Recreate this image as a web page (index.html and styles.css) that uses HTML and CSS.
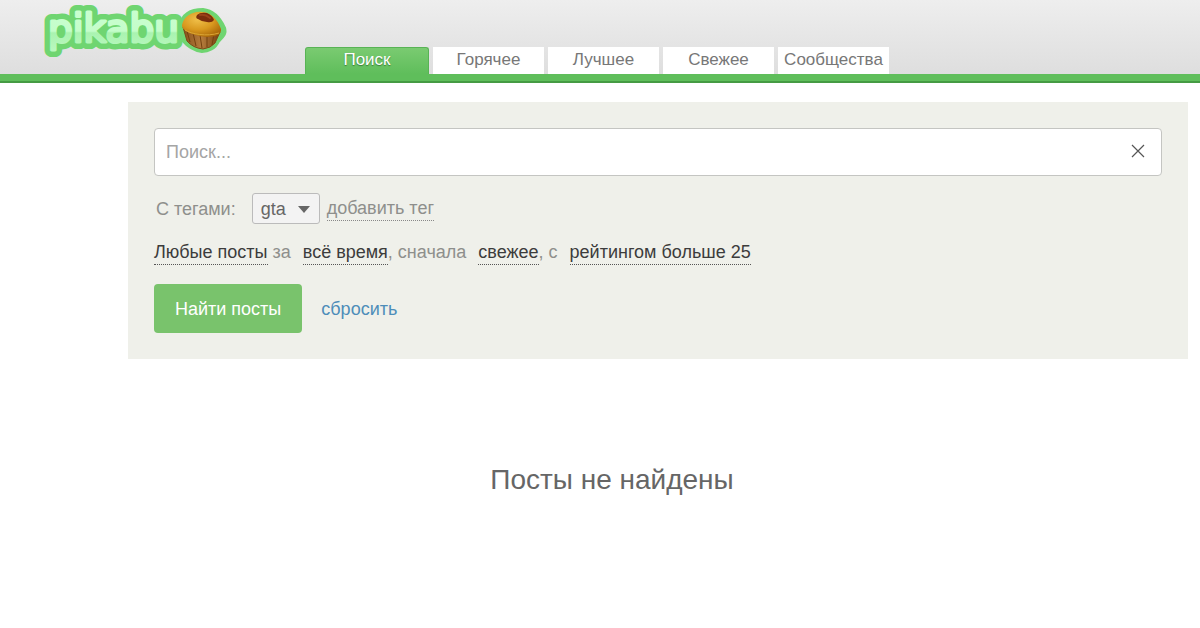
FILE: index.html
```html
<!DOCTYPE html>
<html lang="ru">
<head>
<meta charset="utf-8">
<meta name="viewport" content="width=device-width, initial-scale=1">
<title>Поиск</title>
<link rel="stylesheet" href="styles.css">
</head>
<body>
<header class="header">
  <a class="logo" href="#" aria-label="pikabu">
    <svg width="188" height="56" viewBox="40 4 188 56">
      <defs>
        <linearGradient id="letters" gradientUnits="userSpaceOnUse" x1="0" y1="10" x2="0" y2="54">
          <stop offset="0" stop-color="#c9ffd0"/>
          <stop offset="0.48" stop-color="#c4fdca"/>
          <stop offset="0.52" stop-color="#a9f3b0"/>
          <stop offset="1" stop-color="#bdf9c2"/>
        </linearGradient>
        <radialGradient id="top" cx="0.4" cy="0.3" r="0.75">
          <stop offset="0" stop-color="#f0c04a"/>
          <stop offset="0.55" stop-color="#d9991f"/>
          <stop offset="1" stop-color="#a86608"/>
        </radialGradient>
        <linearGradient id="cup" x1="0" x2="1">
          <stop offset="0" stop-color="#87501b"/>
          <stop offset="0.5" stop-color="#b57c3c"/>
          <stop offset="1" stop-color="#74400f"/>
        </linearGradient>
      </defs>
      <path d="M181 25C183 14 192 10 203 10C212 11 219 17 224 28C226 34 222 37 218 41C215 48 208 51 202 51C194 50 188 46 183 40Z" fill="#6fd571" stroke="#6fd571" stroke-width="4" stroke-linejoin="round"/>
      <text class="logo-outline" x="48" y="42">pikabu</text>
      <text class="logo-letters" x="48" y="42">pikabu</text>
      <path d="M183 27L187 41Q193 48 203 49Q211 48 215 43L220 32Z" fill="url(#cup)" stroke="#7d4916"/>
      <path d="M187 31L190 42M193 33L196 46M200 35L202 48M207 35L207 47M214 34L212 45" stroke="#73400f" stroke-width="1" fill="none"/>
      <path d="M182 25C184 16 193 11 202 12C211 12 218 20 221 29C222 34 216 37 207 37C196 36 183 32 182 26Z" fill="url(#top)"/>
      <path d="M185 30C191 34 207 37 219 33" fill="none" stroke="#dba634" stroke-width="1"/>
      <path d="M197 15Q200 12 207 13Q213 16 214 20Q212 23 207 22Q202 22 198 19Q195 18 197 15Z" fill="#7b2e0c"/>
      <path d="M200 15Q205 14 210 18" stroke="#9a4219" stroke-width="2" fill="none" stroke-linecap="round"/>
    </svg>
  </a>
  <nav class="tabs">
    <a class="tab tab-active" href="#">Поиск</a>
    <a class="tab" href="#">Горячее</a>
    <a class="tab" href="#">Лучшее</a>
    <a class="tab" href="#">Свежее</a>
    <a class="tab" href="#">Сообщества</a>
  </nav>
</header>
<main class="main">
  <form class="search">
    <div class="field">
      <input class="field-input" type="text" placeholder="Поиск..." aria-label="Поиск">
      <button class="field-clear" type="button" aria-label="Очистить">
        <svg width="14" height="14" viewBox="0 0 14 14"><path d="M1 1L13 13M13 1L1 13" stroke="#555" stroke-width="1.2"/></svg>
      </button>
    </div>
    <div class="tags">
      <span class="tags-label">С тегами:</span>
      <button class="tag" type="button">gta
        <svg width="12" height="7" viewBox="0 0 12 7"><path d="M0 0H12L6 7Z" fill="#666"/></svg>
      </button>
      <button class="pick pick-muted" type="button">добавить тег</button>
    </div>
    <p class="filters"><button class="pick" type="button">Любые посты</button> за <button class="pick pick-gap" type="button">всё время</button>, сначала <button class="pick pick-gap" type="button">свежее</button>, с <button class="pick pick-gap" type="button">рейтингом больше 25</button></p>
    <div class="actions">
      <button class="submit" type="submit">Найти посты</button>
      <a class="reset" href="#">сбросить</a>
    </div>
  </form>
</main>
<p class="empty">Посты не найдены</p>
</body>
</html>
```

FILE: styles.css
```css
* {
  box-sizing: border-box;
}

body {
  margin: 0;
  background: #fff;
  color: #8e8f8c;
  font: 18px/24px "Liberation Sans", Arial, sans-serif;
}

button,
input {
  margin: 0;
  font: inherit;
}

button {
  cursor: pointer;
}

.header {
  display: flex;
  align-items: flex-end;
  gap: 77px;
  padding: 4px 0 0 40px;
  background: linear-gradient(#eee, #dedede);
  border-bottom: 7px solid #5fbe5b;
  box-shadow: 0 2px 0 #459b43;
}

.logo {
  display: block;
  height: 70px;
}

.logo svg {
  display: block;
}

.logo-outline,
.logo-letters {
  font: 39px "DejaVu Sans", Verdana, sans-serif;
  stroke-linejoin: round;
}

.logo-outline {
  fill: #6fd571;
  stroke: #6fd571;
  stroke-width: 14px;
}

.logo-letters {
  fill: url(#letters);
  stroke: url(#letters);
  stroke-width: 3px;
}

.tabs {
  display: flex;
  align-items: flex-end;
  gap: 4px;
}

.tab {
  min-width: 111px;
  height: 27px;
  background: #fff;
  color: #777;
  font-size: 17px;
  line-height: 26px;
  text-align: center;
  text-decoration: none;
}

.tab-active {
  min-width: 124px;
  border: 1px solid #58b355;
  border-bottom: 0;
  border-radius: 3px 3px 0 0;
  background: linear-gradient(#7acb71, #5fbe5b);
  color: #fff;
  line-height: 24px;
  text-shadow: 0 1px 1px #3c7c3a;
}

.main {
  padding: 21px 12px 0 128px;
}

.search {
  padding: 26px;
  background: #eff0ea;
}

.field {
  display: flex;
  height: 48px;
  border: 1px solid #c4c5c2;
  border-radius: 4px;
  background: #fff;
}

.field-input {
  flex: 1;
  min-width: 0;
  padding: 0 11px;
  border: 0;
  background: none;
  color: #444;
}

.field-input::placeholder {
  color: #a5a5a5;
}

.field-clear {
  display: flex;
  align-items: center;
  justify-content: center;
  width: 46px;
  padding: 0 0 2px;
  border: 0;
  background: none;
}

.tags {
  display: flex;
  align-items: center;
  margin-top: 17px;
  padding-left: 2px;
}

.tag {
  display: flex;
  align-items: center;
  justify-content: space-between;
  width: 68px;
  height: 31px;
  margin: 0 7px 0 16px;
  padding: 1px 9px 0 8px;
  border: 1px solid #bbb;
  border-radius: 3px;
  background: #f3f3f3;
  color: #666;
}

.pick {
  padding: 0;
  border: 0;
  border-bottom: 1px dotted #555;
  background: none;
  color: #3c3c3c;
  line-height: 23px;
}

.pick-muted {
  border-color: #888;
  color: #8e8f8c;
}

.pick-gap {
  margin-left: 7px;
}

.filters {
  margin: 16px 0 0;
}

.actions {
  display: flex;
  align-items: center;
  gap: 19px;
  margin-top: 19px;
}

.submit {
  height: 49px;
  padding: 0 21px;
  border: 0;
  border-radius: 4px;
  background: #79c36c;
  color: #fff;
}

.reset {
  color: #4d8db9;
  text-decoration: none;
}

.empty {
  margin: 105px 0 0 24px;
  color: #666;
  font-size: 28px;
  line-height: 32px;
  text-align: center;
}
```
